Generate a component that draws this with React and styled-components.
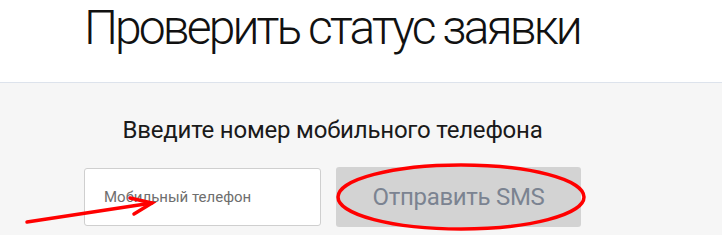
import styled, { createGlobalStyle } from "styled-components";

const GlobalStyle = createGlobalStyle`
  body {
    margin: 0;
    background: #f6f6f6;
    font-family: Roboto, "Liberation Sans", sans-serif;
  }
`;

const Page = styled.div`
  position: relative;
  width: 722px;
  height: 235px;
  overflow: hidden;
  background: #f6f6f6;
`;

const Header = styled.header`
  height: 83px;
  background: #fff;
  border-bottom: 1px solid #dde3ec;
  box-sizing: border-box;
`;

const Inner = styled.div`
  width: 497px;
  margin-left: 84px;
`;

const Title = styled.h1`
  margin: 0;
  font-weight: 300;
  font-size: 48px;
  line-height: 56px;
  color: #111;
  letter-spacing: -2.9px;
  white-space: nowrap;
`;

const Section = styled.section`
  padding-top: 32px;
`;

const Subtitle = styled.h2`
  margin: 0 0 22px;
  text-align: center;
  font-weight: 400;
  font-size: 24px;
  line-height: 30px;
  color: #1a1a1a;
  letter-spacing: -0.2px;
  white-space: nowrap;
`;

const Form = styled.form`
  display: flex;
  gap: 15px;
`;

const Input = styled.input`
  width: 237px;
  height: 58px;
  margin-top: 1px;
  box-sizing: border-box;
  border: 1px solid #cfcfcf;
  border-radius: 3px;
  background: #fff;
  padding: 0 19px;
  font-family: Roboto, "Liberation Sans", sans-serif;
  font-size: 15px;
  outline: none;

  &::placeholder {
    color: #6e6e6e;
  }
`;

const Button = styled.button`
  width: 245px;
  height: 60px;
  border: none;
  border-radius: 3px;
  background: #d3d3d3;
  color: #7b8391;
  font-family: Roboto, "Liberation Sans", sans-serif;
  font-size: 24px;
  letter-spacing: -0.3px;
`;

const Markup = styled.svg`
  position: absolute;
  left: 0;
  top: 0;
  pointer-events: none;
`;

export default function App() {
  return (
    <Page>
      <GlobalStyle />
      <Header>
        <Inner>
          <Title>Проверить статус заявки</Title>
        </Inner>
      </Header>
      <Section>
        <Inner>
          <Subtitle>Введите номер мобильного телефона</Subtitle>
          <Form onSubmit={(e) => e.preventDefault()}>
            <Input placeholder="Мобильный телефон" />
            <Button type="submit">Отправить SMS</Button>
          </Form>
        </Inner>
      </Section>
      <Markup width="722" height="235" viewBox="0 0 722 235">
        <g fill="none" stroke="#f00" strokeLinecap="round" strokeWidth="3.5">
          <ellipse cx="461" cy="197" rx="123" ry="32" />
          <path d="M27 222 L152 203" />
          <path d="M130 198 L152 203 L134 214" />
        </g>
      </Markup>
    </Page>
  );
}
